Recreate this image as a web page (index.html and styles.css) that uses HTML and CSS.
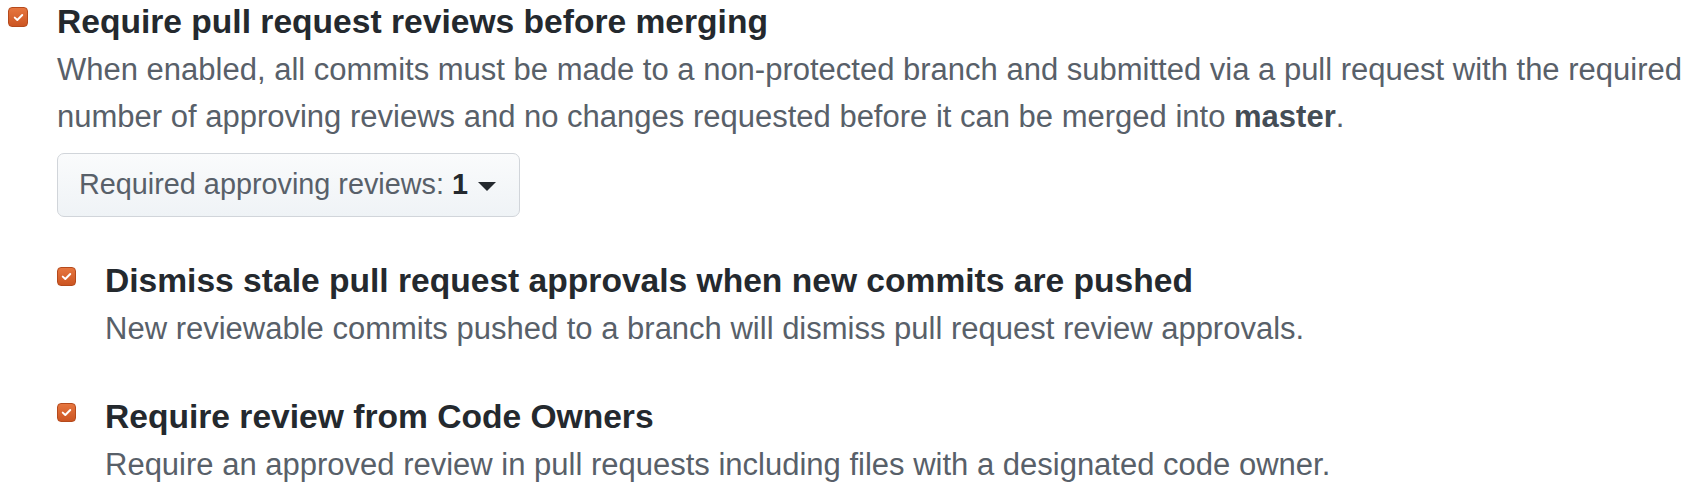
FILE: index.html
```html
<!DOCTYPE html>
<html>
<head>
<meta charset="utf-8">
<link rel="stylesheet" href="styles.css">
</head>
<body>
<div class="rule top">
  <span class="check check-lg"><svg viewBox="0 0 20 20"><path d="M5 10.2 L8.4 13.4 L15 6.6" fill="none" stroke="#fff" stroke-width="2.6" stroke-linecap="round" stroke-linejoin="round"/></svg></span>
  <div class="body">
    <div class="title">Require pull request reviews before merging</div>
    <p class="note">When enabled, all commits must be made to a non-protected branch and submitted via a pull request with the required number of approving reviews and no changes requested before it can be merged into <strong>master</strong>.</p>
    <button class="btn" type="button">Required approving reviews: <strong>1</strong><span class="caret"></span></button>
    <div class="subs">
      <div class="rule sub">
        <span class="check"><svg viewBox="0 0 20 20"><path d="M5 10.2 L8.4 13.4 L15 6.6" fill="none" stroke="#fff" stroke-width="2.6" stroke-linecap="round" stroke-linejoin="round"/></svg></span>
        <div class="body">
          <div class="title">Dismiss stale pull request approvals when new commits are pushed</div>
          <p class="note">New reviewable commits pushed to a branch will dismiss pull request review approvals.</p>
        </div>
      </div>
      <div class="rule sub">
        <span class="check"><svg viewBox="0 0 20 20"><path d="M5 10.2 L8.4 13.4 L15 6.6" fill="none" stroke="#fff" stroke-width="2.6" stroke-linecap="round" stroke-linejoin="round"/></svg></span>
        <div class="body">
          <div class="title">Require review from Code Owners</div>
          <p class="note">Require an approved review in pull requests including files with a designated code owner.</p>
        </div>
      </div>
    </div>
  </div>
</div>
</body>
</html>
```
FILE: styles.css
```css
html, body {
  margin: 0;
  padding: 0;
  background: #fff;
}
html {
  overflow: hidden;
}
body {
  font-family: "Liberation Sans", Arial, Helvetica, sans-serif;
  color: #24292e;
}
.rule {
  display: flex;
  align-items: flex-start;
  padding-left: 8px;
}
.rule.top {
  margin-top: -3px;
}
.rule.sub {
  padding-left: 0;
}
.check {
  flex: none;
  width: 19px;
  height: 19px;
  margin-top: 11px;
  margin-right: 29px;
  box-sizing: border-box;
  border-radius: 4px;
  border: 1px solid #b54a1c;
  background: linear-gradient(#e6763f, #cc5522);
  display: flex;
  align-items: center;
  justify-content: center;
}
.check svg {
  width: 15px;
  height: 15px;
  display: block;
}
.check-lg {
  width: 20px;
  height: 20px;
  margin-top: 10px;
}
.body {
  flex: 1;
  min-width: 0;
}
.title {
  font-size: 33.6px;
  font-weight: bold;
  line-height: 50.4px;
  color: #24292e;
}
.note {
  margin: 0;
  font-size: 31px;
  line-height: 46.6px;
  color: #586069;
}
.note strong {
  color: #444d56;
}
.btn {
  margin-top: 12px;
  display: inline-flex;
  align-items: center;
  height: 64px;
  box-sizing: border-box;
  padding: 0 23px 0 21px;
  border: 1px solid #d1d5da;
  border-radius: 7px;
  background: linear-gradient(#fafbfc, #eff3f6);
  font-family: inherit;
  font-size: 28.8px;
  color: #586069;
  white-space: pre;
}
.btn strong {
  color: #24292e;
}
.caret {
  display: inline-block;
  width: 0;
  height: 0;
  margin-left: 10px;
  margin-top: 3px;
  border-top: 9px solid #24292e;
  border-left: 9px solid transparent;
  border-right: 9px solid transparent;
}
.subs {
  margin-top: 39px;
  display: flex;
  flex-direction: column;
  gap: 39px;
}
```
